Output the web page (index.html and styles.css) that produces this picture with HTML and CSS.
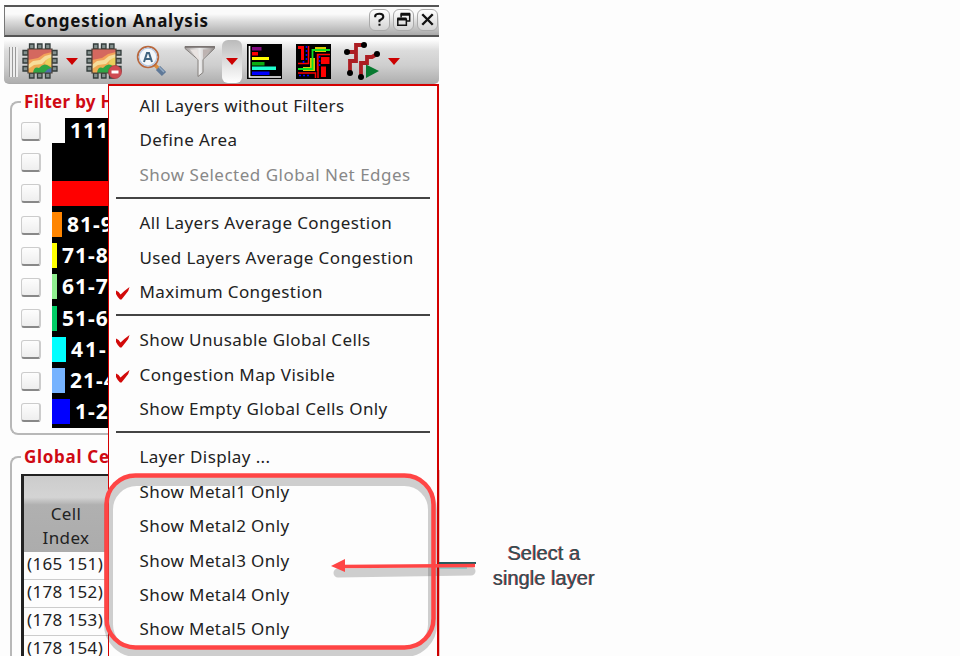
FILE: index.html
```html
<!DOCTYPE html>
<html lang="en">
<head>
<meta charset="utf-8">
<title>Congestion Analysis</title>
<link rel="stylesheet" href="styles.css">
</head>
<body>
<svg class="defs" aria-hidden="true">
  <defs>
    <linearGradient id="metal" x1="0" x2="1"><stop offset="0" stop-color="#a09a99"/><stop offset=".5" stop-color="#eee"/><stop offset="1" stop-color="#8f8988"/></linearGradient>
    <symbol id="chip" viewBox="0 0 36 36">
      <g fill="#84908e" stroke="#333c3b" stroke-width="1.3">
        <path d="M7.500 1h4.500v5h-4.500zM15.500 1H20v5h-4.500zM23.500 1H28v5h-4.500zM7.500 30h4.500v5h-4.500zM15.500 30H20v5h-4.500zM23.500 30H28v5h-4.500zM1 7.500h5V12H1zM1 15.500h5V20H1zM1 23.500h5V28H1zM30 7.500h5V12h-5zM30 15.500h5V20h-5zM30 23.500h5V28h-5z"/>
      </g>
      <path d="M6 6h24v24H6z" fill="#efab54"/>
      <path d="M6 6h24v4l-7 2-6 4-11 2z" fill="#d4685f"/>
      <path d="M6 17l10-2 6-4 8-2v4l-6 2-5 4-7 1-6 4z" fill="#f2a25a"/>
      <path d="M6 22l5-4 7-1 5-4 7-2v4l-6 2-4 4-8 1-6 4z" fill="#f6dd9a"/>
      <path d="M30 14v9l-7-2q0-5 7-7z" fill="#ead05c"/>
      <path d="M11 30q1-7 6-5 4-5 8-3l5 3v5z" fill="#2fa544"/><path d="M22 30l4-4 4-1v5z" fill="#4c70a8"/>
      <path d="M6 6h24v24H6z" fill="none" stroke="#4c4238" stroke-width="1.200"/>
    </symbol>
    <symbol id="check" viewBox="0 0 14 13"><path d="M0 3.500q3 1 4.500 4Q8 4 13.500 0 13 4 9.500 7.500L5.500 12.500H4Q2 11 0 7z" fill="#d20a0a"/></symbol>
  </defs>
</svg>
<main class="stage">
  <section class="window">
    <header class="titlebar">
      <h1>Congestion Analysis</h1>
      <span class="wbtn"><svg viewBox="0 0 20 20"><path d="M5.500 7.500V6Q6 4 10 4t4 3q0 2-4 4v2M10 14.500v2.200" fill="none" stroke="#111" stroke-width="2.200"/></svg></span>
      <span class="wbtn"><svg viewBox="0 0 20 20"><path d="M7.500 8V4.500h9v7H13M4 9.500h9V16H4z" fill="none" stroke="#111" stroke-width="1.600"/><path d="M7 4.500h10M3.500 9.500H13" stroke="#111" stroke-width="3"/></svg></span>
      <span class="wbtn"><svg viewBox="0 0 20 20"><path d="M4.500 4.500l11 11M15.500 4.500l-11 11" stroke="#111" stroke-width="2.500"/></svg></span>
    </header>
    <div class="toolbar">
      <span class="grip"></span>
      <svg class="chip" viewBox="0 0 36 36"><use href="#chip"/></svg>
      <span class="drop d1"></span>
      <svg class="chip c2" viewBox="0 0 36 36"><use href="#chip"/><circle cx="29" cy="29" r="6.500" fill="#cf4b52" stroke="#ad363d" stroke-width=".7"/><path d="M25.500 27.500h7v3h-7z" fill="#fff"/></svg>
      <svg class="find" viewBox="0 0 32 32"><path d="M19 20l4 4" stroke="#dd8d3b" stroke-width="3.500"/><path d="M22 23l6 6" stroke="#5f7998" stroke-width="6"/><path d="M23 22l5 5" stroke="#94abc4" stroke-width="1.500"/><circle cx="12" cy="12" r="10.300" fill="#f4f7fa" stroke="#b8683e" stroke-width="1.800"/><circle cx="12" cy="12" r="8.800" fill="none" stroke="#b5c8e2" stroke-width="1.200"/><path d="M8 17l3-9h2l3 9M9 14h6" fill="none" stroke="#41647f" stroke-width="2"/></svg>
      <svg class="funnel" viewBox="0 0 32 32"><path d="M1 1h29.500v2L19 14v13l-5 4V14L1 3z" fill="url(#metal)" stroke="#85807d"/><path d="M1 1.500h30" stroke="#77716f" stroke-width="1.500"/><path d="M6 4h7l3 10-2 0z" fill="#e9e3e1"/><path d="M19 4h8l-8 9z" fill="#bdb3b1"/></svg>
      <span class="pressed"><span class="drop"></span></span>
      <svg class="chart" viewBox="0 0 35 35"><path d="M0 0h35v35H0z"/><path d="M2.500 2v31H34" fill="none" stroke="#fff" stroke-width="1.700"/><path d="M5 3h9.500v3.500H5z" fill="#80087f"/><path d="M5 8h6v3.500H5z" fill="red"/><path d="M5 13h17v3H5z" fill="#ff0"/><path d="M5 18h12.500v3.500H5z" fill="#0aad12"/><path d="M5 22.500h24V26H5z" fill="#20ffd0"/><path d="M5 27.500h17.500V31H5z" fill="#00f"/></svg>
      <svg class="route" viewBox="0 0 35 35">
        <path d="M0 0h35v35H0z"/>
        <path d="M2 2h6v14H5V5H2zM25 13h8.500v7H25zM25 22.500h5V33h-5z" fill="red"/>
        <path d="M2 19.500h10.500V2M34 10.500H21.500V27M2 29h17.500v5M22 34V11" fill="none" stroke="red" stroke-width="1.500"/>
        <path d="M10.500 2v14M23.500 12v10M3 31.500h11M7.500 17v3" stroke="#00f" stroke-width="1.600" stroke-dasharray="2 2"/>
        <path d="M19 3h11v5H19zM14 14h5v13H7v-4h7z" fill="#dcc800"/>
        <path d="M2 25h14.500V6H34" fill="none" stroke="#0be022" stroke-width="1.800"/>
      </svg>
      <svg class="nets" viewBox="0 0 36 38"><path d="M3 10h9V3h8M12 9v10H6v12M17 34V21h6v-6h5l5-3" fill="none" stroke="#ac1d22" stroke-width="3.800"/><circle cx="3" cy="10" r="3"/><circle cx="20" cy="3" r="3"/><circle cx="33" cy="12" r="3"/><circle cx="6" cy="31" r="3"/><circle cx="17" cy="35" r="3"/><path d="M22 22.500L35 29l-13 7z" fill="#087a31"/></svg>
      <span class="drop d2"></span>
    </div>
    <section class="filter">
      <h2>Filter by H</h2>
      <div class="frame filter-frame">
        <div class="checks"><i></i><i></i><i></i><i></i><i></i><i></i><i></i><i></i><i></i><i></i></div>
        <div class="legend">
          <div class="row"><b class="sw white"></b><span>111</span></div>
          <div class="row"></div>
          <div class="row"><b class="sw red"></b></div>
          <div class="row"><b class="sw orange"></b><span>81-9</span></div>
          <div class="row"><b class="sw yellow"></b><span>71-8</span></div>
          <div class="row"><b class="sw lime"></b><span>61-7</span></div>
          <div class="row"><b class="sw green"></b><span>51-6</span></div>
          <div class="row"><b class="sw cyan"></b><span class="wide">41-</span></div>
          <div class="row"><b class="sw sky"></b><span>21-4</span></div>
          <div class="row"><b class="sw blue"></b><span>1-2</span></div>
        </div>
      </div>
    </section>
    <section class="cells">
      <h2>Global Ce</h2>
      <div class="frame cells-frame">
        <div class="table">
          <div class="th">Cell<br>Index</div>
          <div class="td">(165 151)</div><div class="td">(178 152)</div><div class="td">(178 153)</div><div class="td">(178 154)</div>
        </div>
      </div>
    </section>
  </section>
  <nav class="menu">
    <div class="item">All Layers without Filters</div>
    <div class="item">Define Area</div>
    <div class="item off">Show Selected Global Net Edges</div>
    <hr>
    <div class="item">All Layers Average Congestion</div>
    <div class="item">Used Layers Average Congestion</div>
    <div class="item"><svg viewBox="0 0 14 13"><use href="#check"/></svg>Maximum Congestion</div>
    <hr>
    <div class="item"><svg viewBox="0 0 14 13"><use href="#check"/></svg>Show Unusable Global Cells</div>
    <div class="item"><svg viewBox="0 0 14 13"><use href="#check"/></svg>Congestion Map Visible</div>
    <div class="item">Show Empty Global Cells Only</div>
    <hr>
    <div class="item">Layer Display ...</div>
    <div class="item">Show Metal1 Only</div>
    <div class="item">Show Metal2 Only</div>
    <div class="item">Show Metal3 Only</div>
    <div class="item">Show Metal4 Only</div>
    <div class="item">Show Metal5 Only</div>
  </nav>
  <svg class="marks" viewBox="0 0 960 656">
    <g fill="none" stroke="#444" stroke-opacity=".25"><rect x="108.500" y="481.500" width="324" height="171" rx="28" stroke-width="9"/><path d="M338 573L471 571" stroke-width="9" stroke-linecap="round"/></g>
    <path d="M438.500 470V656" stroke="#c80000" stroke-width="1.500"/>
    <path d="M439 563h37" stroke="#265b5d" stroke-width="2"/><path d="M439 568h28" stroke="#4cc4c4" stroke-width="1"/>
    <rect x="106.500" y="475.500" width="327" height="172" rx="29" fill="none" stroke="#ff4545" stroke-width="4.500"/>
    <path d="M342 566.500L475 565.500" stroke="#ff4545" stroke-width="3.500"/><path d="M331 566l14-7v13z" fill="#ff4545"/>
  </svg>
  <p class="note">Select a<br>single layer</p>
</main>
</body>
</html>
```
FILE: styles.css
```css
* { box-sizing: border-box; }
body { margin: 0; background: #fdfdfd; font-family: "Noto Sans", "Open Sans", sans-serif; color: #222; }
.defs { position: absolute; width: 0; height: 0; }
.stage { position: relative; width: 960px; height: 656px; overflow: hidden; }
.window { width: 439px; height: 656px; padding: 5px 0 0 4px; overflow: hidden; }
.titlebar { display: flex; align-items: center; gap: 3px; height: 32px; padding: 0 1px 3px 19px; border: 1px solid #777; border-top: 2px solid #555; border-bottom: 2px solid #555; border-right: 0; background: linear-gradient(#fafafa 25%, #ddd 50%, #aaa); }
h1 { flex: 1; margin: 3px 0 0; font-size: 17px; line-height: 24px; letter-spacing: .75px; color: #111; white-space: nowrap; }
.wbtn { width: 21px; height: 22px; border: 1px solid #aaa; border-radius: 6px; background: linear-gradient(#fff, #d3d3d3); }
.wbtn svg { display: block; width: 19px; height: 19px; }
.toolbar { display: flex; align-items: center; height: 44px; margin-top: 3px; padding-left: 5px; border-radius: 0 0 5px 5px; border-bottom: 1px solid #aaa; background: linear-gradient(#fcfcfc, #dcdcdc 25%, #cecece 60%, #afafaf); }
.toolbar svg { flex: none; display: block; }
.grip { width: 9px; height: 30px; background: repeating-linear-gradient(90deg, #999 0 1px, #eee 1px 3px); }
.toolbar .chip { width: 36px; height: 36px; margin: -2px 0 0 4px; }
.drop { flex: none; width: 0; height: 0; border: 6px solid transparent; border-top: 7px solid #c00; border-bottom: 0; }
.d1 { margin-left: 8px; }
.toolbar .c2 { margin-left: 8px; }
.find { width: 32px; height: 32px; margin: -2px 0 0 14px; }
.funnel { width: 32px; height: 33px; margin-left: 16px; }
.pressed { flex: none; display: flex; align-items: center; justify-content: center; width: 20px; height: 43px; margin-left: 6px; border-radius: 6px; background: linear-gradient(#bbb, #ddd 50%, #fff); }
.chart { width: 35px; height: 35px; margin-left: 5px; margin-top: -1px; }
.route { width: 35px; height: 35px; margin-left: 14px; margin-top: -1px; }
.nets { width: 38px; height: 38px; margin-left: 12px; margin-top: -1px; }
.d2 { margin-left: 7px; }
h2 { position: relative; width: max-content; margin: 0 0 0 11px; padding: 0 3px; background: #fdfdfd; color: #cf0a13; font-size: 17px; line-height: 25px; height: 24px; letter-spacing: .3px; white-space: nowrap; }
.filter { padding: 5px 0 0 6px; height: 351px; }
.frame { border: 2px solid #b8b8b8; border-right: 0; border-radius: 8px; margin-top: -12px; }
.filter-frame { display: flex; gap: 11px; height: 334px; padding: 15px 0 0 9px; }
.checks { display: grid; grid-template-rows: repeat(10, 31.2px); width: 20px; padding-top: 4px; }
.checks i { width: 20px; height: 19px; border: 1px solid #ccc; border-right: 2px solid #ccc; border-bottom: 2px solid #888; border-radius: 3px; background: linear-gradient(#fdfdfd, #eee); }
.legend { width: 100px; height: 310px; background: #000; overflow: hidden; }
.row { display: flex; align-items: center; gap: 5px; height: 31.25px; padding-bottom: 6px; color: #fff; font-weight: 700; font-size: 21px; line-height: 25px; letter-spacing: 1px; white-space: nowrap; }
.wide { letter-spacing: 2px; }
.sw { flex: none; height: 25px; width: 5px; }
.white { background: #fdfdfd; width: 13px; }
.red { background: red; width: 100px; }
.orange { background: #ff8500; width: 10px; }
.yellow { background: #ff0; }
.lime { background: #8fee8f; }
.green { background: #00cd66; }
.cyan { background: #0ff; width: 14px; }
.sky { background: #76b3ff; width: 13px; }
.blue { background: #00f; width: 18px; }
.cells { padding: 9px 0 0 6px; }
.cells h2 { letter-spacing: .7px; }
.cells-frame { height: 230px; padding: 16px 0 0 9px; }
.table { width: 100px; height: 200px; border-left: 3px solid #222; border-top: 2px solid #222; background: #fdfdfd; }
.th { height: 76px; padding-top: 26px; width: 84px; text-align: center; font-size: 17px; line-height: 24px; background: linear-gradient(#ccc, #d4d4d4 28%, #b0b0b0 38%, #acacac); letter-spacing: .4px; }
.td { height: 28px; padding-left: 3px; border-bottom: 1px solid #ccc; font-size: 17px; line-height: 24px; letter-spacing: .35px; white-space: nowrap; }
.menu { position: absolute; left: 108px; top: 84px; width: 331px; height: 580px; padding: 4px 6px; border: 2px solid #d40000; border-left-width: 1px; background: #fdfdfd; }
.item { position: relative; height: 34.4px; padding-left: 24.5px; font-size: 17px; line-height: 32px; letter-spacing: .4px; white-space: nowrap; }
.item svg { position: absolute; left: 1px; top: 11px; width: 14px; height: 13px; }
.off { color: #888; letter-spacing: .5px; }
.menu hr { height: 1.400px; border: 0; margin: 4px 1px 8.600px 1px; background: #444; }
.marks { position: absolute; left: 0; top: 0; width: 960px; height: 656px; pointer-events: none; }
.note { position: absolute; left: 484px; top: 541px; width: 120px; margin: 0; color: #304e50; font: 20px/25px "Liberation Sans", sans-serif; letter-spacing: .05px; text-align: center; text-shadow: -.7px 0 #c33b50; }
```
